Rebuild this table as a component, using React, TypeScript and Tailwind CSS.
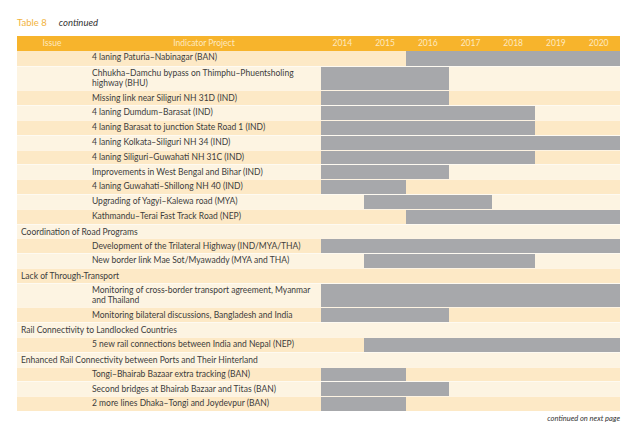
import React from "react";

type Row =
  | { kind: "section"; text: string }
  | { kind: "item"; text: string[]; from: number; to: number };

const rows: Row[] = [
  { kind: "item", text: ["4 laning Paturia–Nabinagar (BAN)"], from: 2, to: 6 },
  { kind: "item", text: ["Chhukha–Damchu bypass on Thimphu–Phuentsholing", "highway (BHU)"], from: 0, to: 2 },
  { kind: "item", text: ["Missing link near Siliguri NH 31D (IND)"], from: 0, to: 2 },
  { kind: "item", text: ["4 laning Dumdum–Barasat (IND)"], from: 0, to: 4 },
  { kind: "item", text: ["4 laning Barasat to junction State Road 1 (IND)"], from: 0, to: 4 },
  { kind: "item", text: ["4 laning Kolkata–Siliguri NH 34 (IND)"], from: 0, to: 6 },
  { kind: "item", text: ["4 laning Siliguri–Guwahati NH 31C (IND)"], from: 0, to: 4 },
  { kind: "item", text: ["Improvements in West Bengal and Bihar (IND)"], from: 0, to: 2 },
  { kind: "item", text: ["4 laning Guwahati–Shillong NH 40 (IND)"], from: 0, to: 1 },
  { kind: "item", text: ["Upgrading of Yagyi–Kalewa road (MYA)"], from: 1, to: 3 },
  { kind: "item", text: ["Kathmandu–Terai Fast Track Road (NEP)"], from: 2, to: 6 },
  { kind: "section", text: "Coordination of Road Programs" },
  { kind: "item", text: ["Development of the Trilateral Highway (IND/MYA/THA)"], from: 0, to: 6 },
  { kind: "item", text: ["New border link Mae Sot/Myawaddy (MYA and THA)"], from: 1, to: 4 },
  { kind: "section", text: "Lack of Through-Transport" },
  { kind: "item", text: ["Monitoring of cross-border transport agreement, Myanmar", "and Thailand"], from: 0, to: 6 },
  { kind: "item", text: ["Monitoring bilateral discussions, Bangladesh and India"], from: 0, to: 2 },
  { kind: "section", text: "Rail Connectivity to Landlocked Countries" },
  { kind: "item", text: ["5 new rail connections between India and Nepal (NEP)"], from: 1, to: 6 },
  { kind: "section", text: "Enhanced Rail Connectivity between Ports and Their Hinterland" },
  { kind: "item", text: ["Tongi–Bhairab Bazaar extra tracking (BAN)"], from: 0, to: 1 },
  { kind: "item", text: ["Second bridges at Bhairab Bazaar and Titas (BAN)"], from: 0, to: 2 },
  { kind: "item", text: ["2 more lines Dhaka–Tongi and Joydevpur (BAN)"], from: 0, to: 1 },
];

const years = ["2014", "2015", "2016", "2017", "2018", "2019", "2020"];

export default function App() {
  return (
    <div
      className="w-[640px] h-[430px] bg-white text-[#3c3c3c] relative"
      style={{ fontFamily: "Lato, 'Open Sans', sans-serif" }}
    >
      <div className="pt-[16px] pl-[17px] flex items-baseline gap-[12px] text-[9.5px] leading-[13px]">
        <span className="text-[#f2b33d]">Table 8</span>
        <span className="italic text-[#333]">continued</span>
      </div>
      <div className="ml-[17px] mt-[7px] w-[603px]">
        <div className="grid grid-cols-[70px_234px_repeat(7,1fr)] h-[15px] bg-[#f7b42c] text-[#fde9c0] text-[8.5px] leading-[15px] text-center">
          <div>Issue</div>
          <div>Indicator Project</div>
          {years.map((y) => (
            <div key={y}>{y}</div>
          ))}
        </div>
        {rows.map((r, i) => {
          const bg = i % 2 === 0 ? "bg-[#fde9c6]" : "bg-[#fdf4e2]";
          const border = i === 0 ? "" : "border-t border-white/50";
          if (r.kind === "section") {
            return (
              <div
                key={i}
                className={`${bg} ${border} h-[14.8px] pl-[4px] pt-[2.3px] text-[8.5px] leading-[10px] whitespace-nowrap`}
              >
                {r.text}
              </div>
            );
          }
          const h = r.text.length === 2 ? "h-[24.6px]" : "h-[14.8px]";
          return (
            <div key={i} className={`${bg} ${border} ${h} grid grid-cols-[70px_234px_repeat(7,1fr)]`}>
              <div />
              <div className="pl-[5px] pt-[2.3px] text-[8.5px] leading-[9.8px] whitespace-nowrap flex flex-col">
                {r.text.map((t) => (
                  <span key={t}>{t}</span>
                ))}
              </div>
              {years.map((y, c) => (
                <div key={y} className={c >= r.from && c <= r.to ? "bg-[#a7a8ab]" : ""} />
              ))}
            </div>
          );
        })}
        <div className="text-right italic text-[7.5px] leading-[10px] mt-[3px] text-[#333]">
          continued on next page
        </div>
      </div>
    </div>
  );
}
